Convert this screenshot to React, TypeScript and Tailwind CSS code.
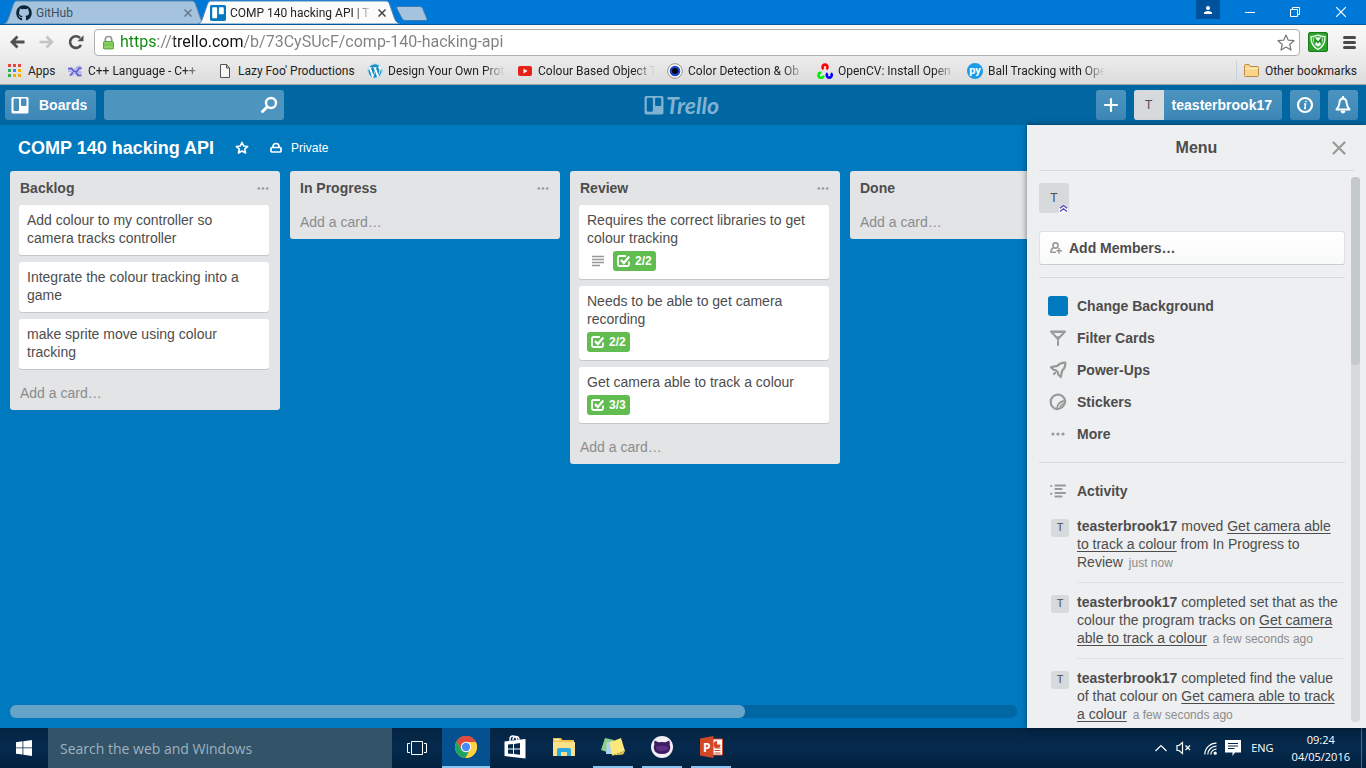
import React from 'react';
import { FaGithub, FaWordpress } from 'react-icons/fa';

/* ---------- Browser chrome ---------- */

function TrelloMark({ className, bg, fg }: { className: string; bg: string; fg: string }) {
  return (
    <svg viewBox="0 0 18 18" className={className} aria-hidden="true">
      <path
        fillRule="evenodd"
        fill={bg}
        d="M2 0h14a2 2 0 0 1 2 2v14a2 2 0 0 1-2 2H2a2 2 0 0 1-2-2V2a2 2 0 0 1 2-2z"
      />
      <rect x="2.5" y="2.5" width="5.5" height="12.5" rx="1" fill={fg} />
      <rect x="10" y="2.5" width="5.5" height="8" rx="1" fill={fg} />
    </svg>
  );
}

function TrelloGlyph({ className }: { className: string }) {
  return (
    <svg viewBox="0 0 18 18" className={className} fill="currentColor" aria-hidden="true">
      <path
        fillRule="evenodd"
        d="M2 1h14a1.500 1.500 0 0 1 1.500 1.500V16A1.500 1.500 0 0 1 16 17.500H2A1.500 1.500 0 0 1 .5 16V2.500A1.500 1.500 0 0 1 2 1zM3.500 2.500a1 1 0 0 0-1 1V14a1 1 0 0 0 1 1H7a1 1 0 0 0 1-1V3.500a1 1 0 0 0-1-1zM11 2.500a1 1 0 0 0-1 1V9a1 1 0 0 0 1 1h3.500a1 1 0 0 0 1-1V3.500a1 1 0 0 0-1-1z"
      />
    </svg>
  );
}

function Tab({ title, icon, active }: { title: string; icon: React.ReactNode; active?: boolean }) {
  return (
    <div className={`relative -mr-2 h-6 w-[202px] ${active ? 'z-10' : ''}`}>
      <svg
        viewBox="0 0 202 24"
        preserveAspectRatio="none"
        className="absolute inset-0 size-full"
        aria-hidden="true"
      >
        <path
          d="M0 24 C3 23 4 20 5 17 L9.500 4 C10.500 1.500 11.500 1 14 1 L187 1 C189.500 1 190.500 1.500 191.500 4 L196 17 C197 20 198.500 23 202 24 Z"
          fill={active ? '#fbfbfb' : '#a5c3de'}
          stroke={active ? '#4c86b8' : '#5d86a8'}
          strokeWidth="1"
        />
      </svg>
      <div className="relative flex h-full items-center gap-1 pt-[2px] pr-3 pl-3">
        {icon}
        <span
          className={`flex-1 overflow-hidden text-[12px] whitespace-nowrap ${active ? 'text-[#222] [mask-image:linear-gradient(to_right,black_88%,transparent)]' : 'text-[#3f4e5b]'}`}
        >
          {title}
        </span>
        <button type="button" aria-label={`Close ${title}`} className="flex size-3 items-center justify-center">
          <svg viewBox="0 0 8 8" className="size-2" stroke={active ? '#444' : '#62788b'} strokeWidth="1.500" aria-hidden="true">
            <path d="M.5.5l7 7M7.500.5l-7 7" />
          </svg>
        </button>
      </div>
    </div>
  );
}

function TitleBar() {
  return (
    <div className="flex h-6 items-start bg-[#0078d7] pl-1">
      <Tab title="GitHub" icon={<FaGithub className="size-4 text-[#0d2636]" />} />
      <Tab
        active
        title="COMP 140 hacking API | T"
        icon={<TrelloMark className="size-4" bg="#0079bf" fg="#fff" />}
      />
      <button type="button" aria-label="New tab" className="mt-[6px] ml-1">
        <svg width="32" height="15" viewBox="0 0 32 15" aria-hidden="true">
          <path d="M2 .5h22q2 0 2.800 2l4 10q.8 2-1.300 2H9q-2 0-3-2L1 3Q0 .5 2 .5z" fill="#a5c3de" stroke="#3b7cb5" />
        </svg>
      </button>
      <div className="ml-auto flex items-start">
        <button type="button" aria-label="Profile" className="flex h-[19px] w-6 items-center justify-center bg-[#00529c]">
          <svg width="8" height="8" viewBox="0 0 8 8" fill="#fff" aria-hidden="true">
            <circle cx="4" cy="2" r="2" />
            <path d="M0 8V6.500Q1 5 4 5t4 1.500V8z" />
          </svg>
        </button>
        <button type="button" aria-label="Minimise" className="ml-2 flex h-6 w-11 items-center justify-center">
          <svg width="10" height="10" viewBox="0 0 10 10" stroke="#fff" aria-hidden="true">
            <path d="M0 5.500h10" />
          </svg>
        </button>
        <button type="button" aria-label="Restore" className="flex h-6 w-[46px] items-center justify-center">
          <svg width="10" height="10" viewBox="0 0 10 10" fill="none" stroke="#fff" aria-hidden="true">
            <path d="M.5 2.500h7v7h-7zM2.500 2.500v-2h7v7h-2" />
          </svg>
        </button>
        <button type="button" aria-label="Close" className="mr-[2px] flex h-6 w-[46px] items-center justify-center">
          <svg width="10" height="10" viewBox="0 0 10 10" stroke="#fff" strokeWidth="1.200" aria-hidden="true">
            <path d="M0 0l10 10M10 0L0 10" />
          </svg>
        </button>
      </div>
    </div>
  );
}

function Toolbar() {
  return (
    <div className="flex h-[33px] items-center border-t border-[#00579c] bg-gradient-to-b from-[#fafafa] to-[#ececec] pt-[2px] pr-[10px] pl-[9px]">
      <button type="button" aria-label="Back" className="mr-[14px]">
        <svg width="16" height="14" viewBox="0 0 16 14" fill="none" stroke="#505050" strokeWidth="2.800" aria-hidden="true">
          <path d="M15.500 7H3M8.500 1.500L3 7L8.500 12.500" />
        </svg>
      </button>
      <button type="button" aria-label="Forward" className="mr-[13px]">
        <svg width="16" height="14" viewBox="0 0 16 14" fill="none" stroke="#c4c4c4" strokeWidth="2.600" aria-hidden="true">
          <path d="M.5 7H13M7.500 1.500L13 7L7.500 12.500" />
        </svg>
      </button>
      <button type="button" aria-label="Reload" className="mr-[10px]">
        <svg width="16" height="16" viewBox="0 0 16 16" fill="none" aria-hidden="true">
          <path d="M13 10.800A5.800 5.800 0 1 1 12 4" stroke="#505050" strokeWidth="2.600" />
          <path d="M15.500 1.200v6H9.500z" fill="#505050" />
        </svg>
      </button>
      <div className="flex h-[27px] flex-1 items-center rounded-sm border border-[#b0b0b0] bg-white pr-1 pl-2">
        <svg width="11" height="15" viewBox="0 0 12 15" aria-hidden="true">
          <path d="M2.500 7V4.500a3.500 3.500 0 0 1 7 0V7" fill="none" stroke="#8f9a8c" strokeWidth="1.800" />
          <rect x=".5" y="6.500" width="11" height="8" rx="1" fill="#8fd466" stroke="#4f9a35" />
          <path d="M1 10h10" stroke="#6cbb45" strokeWidth="3" opacity=".5" />
        </svg>
        <input
          aria-label="Address"
          type="text"
          defaultValue="https://trello.com/b/73CySUcF/comp-140-hacking-api"
          className="ml-[6px] h-6 min-w-0 flex-1 bg-[linear-gradient(to_right,#0b8a0b_0_38px,#808080_38px_54px,#111_54px_124px,#808080_124px)] bg-clip-text text-[16px] text-transparent outline-none"
        />
        <button type="button" aria-label="Bookmark this page">
          <svg width="18" height="17" viewBox="0 0 18 17" fill="none" stroke="#777" strokeWidth="1.200" strokeLinejoin="round" aria-hidden="true">
            <path d="M9 1l2.300 5.200 5.700.5-4.300 3.800 1.300 5.600L9 13.100l-5 3 1.300-5.600L1 6.700l5.700-.5z" />
          </svg>
        </button>
      </div>
      <button type="button" aria-label="SiteAdvisor" className="ml-2">
        <svg width="20" height="20" viewBox="0 0 20 20" aria-hidden="true">
          <rect x=".5" y=".5" width="19" height="19" rx="1.500" fill="#2ba32b" stroke="#197a19" />
          <path d="M3 4.500q4 0 7-1.500 3 1.500 7 1.500.5 9-7 13-7.500-4-7-13z" fill="#3fb53f" stroke="#fff" strokeWidth="1.200" />
          <path d="M5.500 5.500l9 0 0 4-2 3.500-2.500 1.500L7.500 13l-2-3.500z" fill="#fff" />
          <path d="M7 11.500V7l3 3.500L13 7v4.500" fill="none" stroke="#1e8f1e" strokeWidth="1.700" />
        </svg>
      </button>
      <button type="button" aria-label="Customise" className="ml-[15px]">
        <svg width="13" height="13" viewBox="0 0 13 13" stroke="#4a4a4a" strokeWidth="3" strokeLinecap="round" aria-hidden="true">
          <path d="M1.500 1.500h10M1.500 6.500h10M1.500 11.500h10" />
        </svg>
      </button>
    </div>
  );
}

const bookmarks: { label: string; fade?: boolean; icon: React.ReactNode }[] = [
  {
    label: 'C++ Language - C++',
    fade: true,
    icon: (
      <svg width="16" height="16" viewBox="0 0 16 16" fill="none" aria-hidden="true">
        <path d="M1 5l4-1 2 2 3-3 3-.5L15.500 5 13 7l2 3-1 3-4 .5L8 11l-3 2.500-3-1L4 9.500 1 9z" fill="#b9b9f0" />
        <path d="M1 5.500h3.500l2.500 3h3l2-3.500 2.500.5M3 12.500l3-3M9 9.500l2 3h3.500" stroke="#5c5cc0" strokeWidth="1.500" />
      </svg>
    ),
  },
  {
    label: "Lazy Foo' Productions",
    icon: (
      <svg width="16" height="16" viewBox="0 0 16 16" fill="#f6f6f6" stroke="#555" aria-hidden="true">
        <path d="M3.500 1.500h6l3 3.500v9.500h-9zM9.500 1.500V5h3" />
      </svg>
    ),
  },
  { label: 'Design Your Own Prot', fade: true, icon: <FaWordpress className="size-4 rounded-full bg-white text-[#1a8fc4]" /> },
  {
    label: 'Colour Based Object T',
    fade: true,
    icon: (
      <svg width="16" height="16" viewBox="0 0 16 16" aria-hidden="true">
        <rect x="1" y="3" width="14" height="10" rx="2" fill="#e62117" />
        <path d="M6.500 5.500v5l4-2.500z" fill="#fff" />
      </svg>
    ),
  },
  {
    label: 'Color Detection & Ob',
    fade: true,
    icon: (
      <svg width="16" height="16" viewBox="0 0 16 16" aria-hidden="true">
        <circle cx="8" cy="8" r="7.300" fill="#fff" stroke="#9a8d80" />
        <circle cx="8" cy="8" r="5.300" fill="#1c44c8" />
        <circle cx="8" cy="8" r="3" fill="#05050f" />
      </svg>
    ),
  },
  {
    label: 'OpenCV: Install Open',
    fade: true,
    icon: (
      <svg width="16" height="16" viewBox="0 0 16 16" fill="none" strokeWidth="2.600" aria-hidden="true">
        <path d="M6.600 6.200A2.500 2.500 0 1 1 9.400 6.200" stroke="#f00" />
        <path d="M4.300 9.800A2.500 2.500 0 1 0 6.500 12.600" stroke="#0e0" />
        <path d="M10.600 10.200A2.500 2.500 0 1 0 13.900 10.200" stroke="#00f" />
      </svg>
    ),
  },
  {
    label: 'Ball Tracking with Ope',
    fade: true,
    icon: (
      <span className="flex size-4 items-center justify-center overflow-hidden rounded-full bg-[#1c9ce8] text-[11px] leading-none font-bold text-white">
        py
      </span>
    ),
  },
];

function Bookmarks() {
  return (
    <nav
      aria-label="Bookmarks"
      className="flex h-7 items-center border-b border-[#a3a3a3] bg-gradient-to-b from-[#ececec] to-[#dcdcdc] pr-[9px] pl-2 text-[12px] text-[#222]"
    >
      <a href="#apps" className="flex w-[59px] items-center gap-[7px]">
        <svg width="13" height="13" viewBox="0 0 13 13" aria-hidden="true">
          <path d="M0 0h3v3H0zM5 0h3v3H5zM10 0h3v3h-3z" fill="#e8453c" />
          <path d="M0 5h3v3H0z" fill="#34a853" />
          <path d="M5 5h3v3H5z" fill="#4285f4" />
          <path d="M10 5h3v3h-3zM5 10h3v3H5zM10 10h3v3h-3z" fill="#f9ab00" />
          <path d="M0 10h3v3H0z" fill="#34a853" />
        </svg>
        Apps
      </a>
      <div className="flex gap-3">
        {bookmarks.map((b) => (
          <a key={b.label} href="#bookmark" className="flex w-[138px] items-center gap-[5px]">
            <span className="shrink-0">{b.icon}</span>
            <span
              className={`flex-1 overflow-hidden whitespace-nowrap ${b.fade ? '[mask-image:linear-gradient(to_right,black_82%,transparent)]' : ''}`}
            >
              {b.label}
            </span>
          </a>
        ))}
      </div>
      <a href="#other" className="ml-auto flex h-5 items-center gap-[6px] border-l border-[#c4d2e0] pl-[7px] whitespace-nowrap">
        <svg width="15" height="13" viewBox="0 0 15 13" aria-hidden="true">
          <path d="M.5 11.500V1.500q0-1 1-1H5L6.500 2.500h7q1 0 1 1v8q0 1-1 1h-12q-1 0-1-1z" fill="#fbd58a" stroke="#b98a45" />
          <path d="M1 4.500h13" stroke="#fdeec6" />
        </svg>
        Other bookmarks
      </a>
    </nav>
  );
}

/* ---------- Trello ---------- */

const headerButton =
  'flex h-[30px] items-center justify-center rounded-[3px] bg-gradient-to-b from-[#4d94bf] to-[#3c87b7] text-white';

function TrelloHeader() {
  return (
    <header className="grid h-10 grid-cols-3 items-center bg-[#0067a3] pr-2 pl-[5px] text-sm font-bold">
      <div className="flex gap-2">
        <button type="button" className={`${headerButton} gap-[10px] pr-[9px] pl-[6px]`}>
          <TrelloGlyph className="size-[18px]" />
          Boards
        </button>
        <label className="flex h-[30px] w-[180px] items-center rounded-[3px] bg-[#4d94bf] pr-[6px]">
          <input type="text" aria-label="Search" className="h-full min-w-0 flex-1 bg-transparent pl-2 outline-none" />
          <svg width="18" height="18" viewBox="0 0 18 18" fill="none" stroke="#fff" aria-hidden="true">
            <circle cx="11" cy="7" r="5" strokeWidth="2.400" />
            <path d="M7.300 10.800L2.500 15.500" strokeWidth="3" strokeLinecap="round" />
          </svg>
        </label>
      </div>
      <a href="#home" aria-label="Trello" className="flex items-center justify-center gap-[2px] text-[#80b3d1]">
        <TrelloGlyph className="size-5" />
        <span className="font-[Lato] text-[23px] leading-6 font-bold italic">Trello</span>
      </a>
      <div className="flex justify-end gap-2">
        <button type="button" aria-label="Create" className={`${headerButton} w-[30px]`}>
          <svg width="16" height="16" viewBox="0 0 16 16" stroke="#fff" strokeWidth="2.200" strokeLinecap="round" aria-hidden="true">
            <path d="M8 2v12M2 8h12" />
          </svg>
        </button>
        <button type="button" className={`${headerButton} overflow-hidden pr-[10px]`}>
          <span className="mr-2 flex h-full w-[30px] items-center justify-center bg-[#d6dadc] text-xs font-normal text-[#4d4d4d]">T</span>
          teasterbrook17
        </button>
        <button type="button" aria-label="Information" className={`${headerButton} w-[30px]`}>
          <svg width="18" height="18" viewBox="0 0 18 18" fill="none" stroke="#fff" aria-hidden="true">
            <circle cx="9" cy="9" r="7" strokeWidth="2.200" />
            <path d="M10 5l-.2 1" strokeWidth="2" />
            <path d="M8 8h1.600l-.8 4.500h1.200" strokeWidth="1.500" />
          </svg>
        </button>
        <button type="button" aria-label="Notifications" className={`${headerButton} w-[30px]`}>
          <svg width="18" height="18" viewBox="0 0 18 18" fill="none" stroke="#fff" strokeWidth="2" strokeLinejoin="round" aria-hidden="true">
            <path d="M9 2.500C6.200 2.500 5.500 5 5.300 7.500 5.100 10 4.500 11.500 2.500 13.500h13c-2-2-2.600-3.500-2.800-6C12.500 5 11.800 2.500 9 2.500z" />
            <path d="M9 .8v2" strokeLinecap="round" />
            <path d="M7 15a2 2 0 0 0 4 0z" fill="#fff" strokeWidth="1" />
          </svg>
        </button>
      </div>
    </header>
  );
}

function Dots({ className }: { className: string }) {
  return (
    <svg viewBox="0 0 14 6" fill="currentColor" className={className} aria-hidden="true">
      <circle cx="2" cy="3" r="1.600" />
      <circle cx="7" cy="3" r="1.600" />
      <circle cx="12" cy="3" r="1.600" />
    </svg>
  );
}

type Card = { text: string; checks?: string; description?: boolean };

const lists: { name: string; cards: Card[] }[] = [
  {
    name: 'Backlog',
    cards: [
      { text: 'Add colour to my controller so camera tracks controller' },
      { text: 'Integrate the colour tracking into a game' },
      { text: 'make sprite move using colour tracking' },
    ],
  },
  { name: 'In Progress', cards: [] },
  {
    name: 'Review',
    cards: [
      { text: 'Requires the correct libraries to get colour tracking', checks: '2/2', description: true },
      { text: 'Needs to be able to get camera recording', checks: '2/2' },
      { text: 'Get camera able to track a colour', checks: '3/3' },
    ],
  },
  { name: 'Done', cards: [] },
];

function CardView({ card }: { card: Card }) {
  return (
    <li className="mb-[7px] rounded-[3px] bg-white px-2 pt-[6px] pb-2 leading-[18px] text-[#4d4d4d] shadow-[0_1px_0_#c4c8cb]">
      <p>{card.text}</p>
      {card.checks && (
        <div className="mt-1 flex gap-1 text-xs font-bold">
          {card.description && (
            <span className="flex h-5 w-[22px] items-center justify-center">
              <svg width="12" height="12" viewBox="0 0 12 12" stroke="#999" strokeWidth="1.500" aria-label="Has a description">
                <path d="M0 1.500h12M0 4.500h12M0 7.500h12M0 10.500h8" />
              </svg>
            </span>
          )}
          <span className="flex h-5 items-center gap-1 rounded-[3px] bg-[#61bd4f] pr-1 pl-[3px] text-white">
            <svg width="15" height="14" viewBox="0 0 15 14" fill="none" stroke="#fff" aria-hidden="true">
              <path d="M10 2H3.500Q2 2 2 3.500v7Q2 12 3.500 12h8q1.500 0 1.500-1.500V7.500" strokeWidth="1.800" />
              <path d="M5 6L7.800 9L13.300 2.500" strokeWidth="2.200" />
            </svg>
            {card.checks}
          </span>
        </div>
      )}
    </li>
  );
}

function ListView({ name, cards }: { name: string; cards: Card[] }) {
  return (
    <section className="w-[270px] shrink-0 rounded-[3px] bg-[#e2e4e6] pr-[11px] pl-[9px]">
      <div className="flex h-[34px] items-center justify-between pl-px">
        <h2 className="font-bold text-[#4d4d4d]">{name}</h2>
        <button type="button" aria-label={`${name} actions`} className="text-[#999]">
          <Dots className="h-[5px] w-3" />
        </button>
      </div>
      <ul>
        {cards.map((c) => (
          <CardView key={c.text} card={c} />
        ))}
      </ul>
      <a href="#add" className="flex h-[34px] items-center pl-px text-[#8c8c8c]">
        Add a card…
      </a>
    </section>
  );
}

function Board() {
  return (
    <main className="flex min-w-0 flex-1 flex-col overflow-hidden pb-[10px]">
      <div className="flex h-[46px] shrink-0 items-center pl-[18px] text-white">
        <h1 className="text-lg font-bold">COMP 140 hacking API</h1>
        <button type="button" aria-label="Star board" className="ml-[21px]">
          <svg width="14" height="14" viewBox="0 0 14 14" fill="none" stroke="#fff" strokeWidth="1.700" strokeLinejoin="round" aria-hidden="true">
            <path d="M7 1.500l1.700 3.500 3.900.5-2.900 2.600.8 3.900L7 10.100l-3.500 1.900.8-3.900L1.400 5.500l3.900-.5z" />
          </svg>
        </button>
        <button type="button" className="ml-[21px] flex items-center gap-[9px] text-xs">
          <svg width="12" height="12" viewBox="0 0 12 12" fill="none" stroke="#fff" strokeWidth="1.700" aria-hidden="true">
            <rect x="1" y="5.500" width="10" height="4.500" rx="1" />
            <path d="M3 5.500V4.500a3 3 0 0 1 6 0v1" />
          </svg>
          Private
        </button>
      </div>
      <div className="flex min-h-0 flex-1 items-start gap-[10px] overflow-hidden pl-[10px] text-sm">
        {lists.map((l) => (
          <ListView key={l.name} {...l} />
        ))}
      </div>
      <div className="mx-[10px] h-[13px] shrink-0 rounded-md bg-[#0067a3]">
        <div className="h-full w-[73%] rounded-md bg-[#66a3c9]" />
      </div>
    </main>
  );
}

const menuItems: { label: string; icon: React.ReactNode }[] = [
  { label: 'Change Background', icon: <span className="size-5 rounded-[3px] bg-[#0079bf]" /> },
  {
    label: 'Filter Cards',
    icon: (
      <svg width="18" height="18" viewBox="0 0 18 18" fill="none" stroke="#999" strokeWidth="2" strokeLinejoin="round" aria-hidden="true">
        <path d="M2 2.500h14L9.800 9.200H8.200z" />
        <path d="M9 8v3M9 12.500v3.500" strokeLinecap="round" />
        <path d="M5 3.500h8" strokeWidth="1" />
      </svg>
    ),
  },
  {
    label: 'Power-Ups',
    icon: (
      <svg width="18" height="18" viewBox="0 0 18 18" fill="none" stroke="#999" strokeWidth="2.200" strokeLinejoin="round" aria-hidden="true">
        <path d="M16.300 1.700C13 1.500 10.500 2.500 8.500 4.800L2 6.200l2.500 2.600L6.500 9l2.500 2.500.2 2L11.800 16l1.400-6.500C15.500 7.500 16.500 5 16.300 1.700z" />
        <path d="M6.200 11.800L5 13" strokeLinecap="round" />
      </svg>
    ),
  },
  {
    label: 'Stickers',
    icon: (
      <svg width="18" height="18" viewBox="0 0 18 18" fill="none" stroke="#999" strokeWidth="2.200" aria-hidden="true">
        <path d="M16.200 8A7.300 7.300 0 1 0 8 16.200" />
        <path d="M16.300 8C11.500 8 7.800 11 8 16.200 12.500 16 16.500 12 16.300 8z" strokeWidth="1.900" strokeLinejoin="round" />
        <path d="M10.500 14L14.500 10" strokeWidth="1.200" />
      </svg>
    ),
  },
  { label: 'More', icon: <Dots className="h-[6px] w-[14px] text-[#999]" /> },
];

const activity = [
  { before: 'moved', link: 'Get camera able to track a colour', after: ' from In Progress to Review', when: 'just now' },
  {
    before: 'completed set that as the colour the program tracks on',
    link: 'Get camera able to track a colour',
    after: '',
    when: 'a few seconds ago',
  },
  {
    before: 'completed find the value of that colour on',
    link: 'Get camera able to track a colour',
    after: '',
    when: 'a few seconds ago',
  },
];

function BoardMenu() {
  return (
    <aside className="relative z-10 flex w-[339px] shrink-0 flex-col bg-[#edeff0] pl-3 text-sm text-[#4d4d4d] shadow-[0_0_6px_rgba(0,0,0,0.5)]">
      <div className="mr-3 flex h-[46px] shrink-0 items-center border-b border-[#d6dadc]">
        <h2 className="flex-1 pl-[22px] text-center text-base font-bold">Menu</h2>
        <button type="button" aria-label="Close menu" className="mr-2">
          <svg width="14" height="14" viewBox="0 0 14 14" stroke="#999" strokeWidth="2.200" strokeLinecap="round" aria-hidden="true">
            <path d="M1.500 1.500l11 11M12.500 1.500l-11 11" />
          </svg>
        </button>
      </div>
      <div className="flex min-h-0 flex-1">
        <div className="min-w-0 flex-1 overflow-hidden pt-3">
          <div className="relative flex size-[30px] items-center justify-center rounded-[3px] bg-[#d6dadc] text-xs">
            T
            <svg width="9" height="9" viewBox="0 0 9 9" fill="none" className="absolute right-px bottom-0" aria-hidden="true">
              <path d="M0 4.500L4.500 .5 9 4.500V9H0z" fill="#fff" />
              <path d="M1 4.200L4.500 1.500 8 4.200M1 7.500l3.500-2.700L8 7.500" stroke="#4b3fb5" strokeWidth="1.200" />
            </svg>
          </div>
          <button
            type="button"
            className="mt-[18px] flex h-[34px] w-full items-center gap-[7px] rounded-[3px] border border-[#dfe1e3] border-b-[#c9cdd0] bg-gradient-to-b from-white to-[#f8f9f9] pl-[10px] font-bold"
          >
            <svg width="12" height="12" viewBox="0 0 12 12" fill="none" stroke="#999" strokeWidth="1.600" aria-hidden="true">
              <circle cx="5.500" cy="3.500" r="2.600" />
              <path d="M3.500 5.800C1.500 6.500 1 8 1 10.200h5M9 6v5.500M6.500 8.700H12" />
            </svg>
            Add Members…
          </button>
          <nav className="mt-3 border-y border-[#d6dadc] pt-3 pb-3">
            {menuItems.map((m) => (
              <a key={m.label} href="#menu" className="flex h-8 items-center gap-[9px] pl-[9px] font-bold">
                <span className="flex w-5 justify-center">{m.icon}</span>
                {m.label}
              </a>
            ))}
          </nav>
          <h3 className="mt-3 flex h-8 items-center gap-[9px] pl-[9px] font-bold">
            <span className="flex w-5 justify-center">
              <svg width="16" height="14" viewBox="0 0 16 14" stroke="#999" strokeWidth="2.200" strokeLinecap="round" aria-hidden="true">
                <path d="M1.200 2h.1M1.200 9.800h.1M5.500 1.500H15M5.500 5h6M5.500 9H15M5.500 12.500h6" />
              </svg>
            </span>
            Activity
          </h3>
          {activity.map((a, i) => (
            <div key={i} className="flex gap-2 pl-3">
              <span className="mt-3 flex size-[18px] shrink-0 items-center justify-center rounded-[3px] bg-[#d6dadc] text-[11px]">T</span>
              <p className="flex-1 border-b border-[#dfe2e4] pt-[10px] pb-[11px] leading-[18px]">
                <strong>teasterbrook17</strong> {a.before}{' '}
                <a href="#card" className="underline underline-offset-2">
                  {a.link}
                </a>
                {a.after} <small className="ml-[2px] text-xs text-[#8c8c8c]">{a.when}</small>
              </p>
            </div>
          ))}
        </div>
        <div className="m-[6px] w-[9px] rounded bg-[#d6dadc]">
          <div className="h-[188px] rounded bg-[#c4c9cc]" />
        </div>
      </div>
    </aside>
  );
}

/* ---------- Windows taskbar ---------- */

const apps: { name: string; active?: boolean; open?: boolean; icon: React.ReactNode }[] = [
  {
    name: 'Google Chrome',
    active: true,
    open: true,
    icon: (
      <svg width="22" height="22" viewBox="0 0 22 22" aria-hidden="true">
        <circle cx="11" cy="11" r="11" fill="#fdd23e" />
        <path d="M11 11L1.470 5.500A11 11 0 0 1 20.530 5.500z" fill="#dd4b3e" />
        <path d="M11 6h9.800A11 11 0 0 0 1.470 5.500L6.670 13.500z" fill="#dd4b3e" />
        <path d="M1.470 5.500A11 11 0 0 0 10.500 22l4.830-8.500L6.670 13.500z" fill="#1da362" />
        <path d="M20.800 6H11l4.330 7.500L10.500 22A11 11 0 0 0 20.800 6z" fill="#fdd23e" />
        <circle cx="11" cy="11" r="5.200" fill="#fff" />
        <circle cx="11" cy="11" r="4.200" fill="#4b8bf5" />
      </svg>
    ),
  },
  {
    name: 'Store',
    icon: (
      <svg width="22" height="24" viewBox="0 0 22 24" aria-hidden="true">
        <path d="M6 6V4q0-3 3-3t4 4M9 5q0-3.500 3-3.500T15 5" fill="none" stroke="#fff" strokeWidth="1.400" />
        <path d="M.5 6.500L21.500 4v19.500L.5 21z" fill="#fff" />
        <path d="M4 9.600l5-.6v4.500H4zM10 8.900l6-.8v5.400h-6zM4 14.500h5V19l-5-.6zM10 14.500h6v5.300l-6-.7z" fill="#04274a" />
      </svg>
    ),
  },
  {
    name: 'File Explorer',
    icon: (
      <svg width="22" height="18" viewBox="0 0 22 18" aria-hidden="true">
        <path d="M0 0h8l1.500 2H21v15H0z" fill="#f0c14b" />
        <path d="M1.500 1h5v1.500h-5z" fill="#fff3c4" />
        <path d="M0 4h22v14H0z" fill="#fbe08b" />
        <path d="M4 18v-6q0-2 2-2h10q2 0 2 2v6h-4v-4H8v4z" fill="#29a9e1" />
      </svg>
    ),
  },
  {
    name: 'Sticky Notes',
    open: true,
    icon: (
      <svg width="24" height="20" viewBox="0 0 24 20" aria-hidden="true">
        <path d="M4 1l9 2-4 13-9-3z" fill="#8fce8a" />
        <path d="M6 5l9-1 1 13H5z" fill="#a9d4f5" />
        <path d="M8.500 5.500L20 1l4 13-13 4.500z" fill="#fbe87c" />
        <path d="M11 18.500l13-4.500-2 3.500z" fill="#e3c74d" />
      </svg>
    ),
  },
  {
    name: 'GitHub',
    open: true,
    icon: (
      <svg width="22" height="22" viewBox="0 0 22 22" aria-hidden="true">
        <circle cx="11" cy="11" r="11" fill="#f1eef6" />
        <path d="M3.800 4.500l3.500 1.800q3.700-.8 7.400 0l3.500-1.800q.9 2 .4 4 .8 1.500.6 3.500-.6 6-8.200 6t-8.200-6q-.2-2 .6-3.500-.5-2 .4-4z" fill="#3f1d62" />
        <path d="M5 10.500q6-1.500 12 0 .5 4.500-6 4.700-6.500-.2-6-4.700z" fill="#5c2f86" />
      </svg>
    ),
  },
  {
    name: 'PowerPoint',
    open: true,
    icon: (
      <svg width="23" height="22" viewBox="0 0 23 22" aria-hidden="true">
        <path d="M12 3h10.500v16H12z" fill="#fff" stroke="#d24726" />
        <path d="M14.500 12h6M14.500 14.500h6M14.500 17h6" stroke="#d24726" strokeWidth="1.200" />
        <path d="M17 5v3.500h3.500A3.500 3.500 0 1 1 17 5z" fill="#d24726" />
        <path d="M0 2.500L13.500 0v22L0 19.500z" fill="#d24726" />
        <text x="3" y="15.500" fontSize="12" fontWeight="bold" fill="#fff" fontFamily="Open Sans, sans-serif">
          P
        </text>
      </svg>
    ),
  },
];

function Taskbar() {
  return (
    <footer className="flex h-10 shrink-0 items-stretch bg-gradient-to-b from-[#042443] via-[#052a4d] to-[#03223f] text-white">
      <button type="button" aria-label="Start" className="flex w-12 items-center justify-center">
        <svg width="16" height="16" viewBox="0 0 16 16" fill="#fff" aria-hidden="true">
          <path d="M0 2.200L6.500 1.300V7.500H0zM7.300 1.200L16 0v7.500H7.300zM0 8.300h6.500v6.300L0 13.700zM7.300 8.300H16V16l-8.700-1.300z" />
        </svg>
      </button>
      <input
        type="text"
        aria-label="Search the web and Windows"
        placeholder="Search the web and Windows"
        className="w-[344px] bg-[#335368] px-3 text-[14px] outline-none placeholder:text-[#9fb2bf]"
      />
      <button type="button" aria-label="Task view" className="flex w-[50px] items-center justify-center">
        <svg width="20" height="14" viewBox="0 0 20 14" fill="none" stroke="#fff" aria-hidden="true">
          <path d="M4.500 .5h11v13h-11zM3 2.500H.5v9H3M17 2.500h2.500v9H17" />
        </svg>
      </button>
      <div className="flex gap-px">
        {apps.map((a) => (
          <button
            key={a.name}
            type="button"
            aria-label={a.name}
            className={`flex w-12 flex-col items-center ${a.active ? 'bg-[#05508f]' : ''}`}
          >
            <span className="flex flex-1 items-center">{a.icon}</span>
            <span className={`h-[2px] ${a.active ? 'w-full' : 'w-10'} ${a.open ? 'bg-[#8ac4f0]' : ''}`} />
          </button>
        ))}
      </div>
      <div className="ml-auto flex items-center text-[11px]">
        <button type="button" aria-label="Show hidden icons">
          <svg width="12" height="8" viewBox="0 0 12 8" fill="none" stroke="#fff" strokeWidth="1.200" aria-hidden="true">
            <path d="M.5 7L6 1.500 11.500 7" />
          </svg>
        </button>
        <button type="button" aria-label="Volume muted" className="ml-[9px]">
          <svg width="16" height="14" viewBox="0 0 16 14" fill="none" stroke="#fff" strokeWidth="1.200" aria-hidden="true">
            <path d="M1 4.500h2L6.500 1.500v11L3 9.500H1zM9.500 4.500l4.500 4.500M14 4.500L9.500 9" />
          </svg>
        </button>
        <button type="button" aria-label="Network" className="ml-3">
          <svg width="13" height="13" viewBox="0 0 13 13" fill="none" stroke="#fff" strokeWidth="1.200" aria-hidden="true">
            <path d="M.8 12.500A11.500 11.500 0 0 1 12.500 1.200M3.800 12.500A8.500 8.500 0 0 1 12.500 4.200M6.800 12.500A5.500 5.500 0 0 1 12.500 7.200" />
            <circle cx="11.200" cy="11.200" r="1.600" fill="#fff" stroke="none" />
          </svg>
        </button>
        <button type="button" aria-label="Notifications" className="ml-2">
          <svg width="16" height="16" viewBox="0 0 16 16" aria-hidden="true">
            <path d="M0 0h16v12.500h-6L7.500 16v-3.500H0z" fill="#fff" />
            <path d="M3 3.500h10M3 6h10M3 8.500h6.500" stroke="#04274a" />
          </svg>
        </button>
        <span className="ml-[10px]">ENG</span>
        <time className="ml-[18px] text-center leading-[17px]">
          09:24
          <br />
          04/05/2016
        </time>
        <span className="ml-[11px] h-full w-[5px] border-l border-[#4d6983]" />
      </div>
    </footer>
  );
}

export default function App() {
  return (
    <div className='flex h-screen flex-col overflow-hidden font-["Liberation_Sans",Arial,sans-serif]'>
      <div className="shrink-0 font-[Roboto,sans-serif]">
        <TitleBar />
        <Toolbar />
        <Bookmarks />
      </div>
      <div className="shrink-0">
        <TrelloHeader />
      </div>
      <div className="flex min-h-0 flex-1 bg-[#0079bf]">
        <Board />
        <BoardMenu />
      </div>
      <div className='shrink-0 font-["Open_Sans",sans-serif]'>
        <Taskbar />
      </div>
    </div>
  );
}
